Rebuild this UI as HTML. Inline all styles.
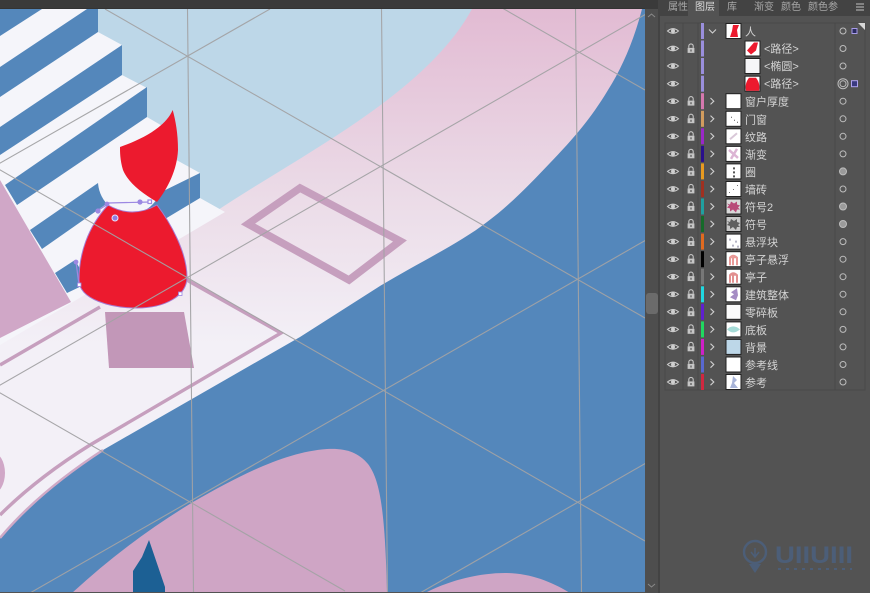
<!DOCTYPE html>
<html><head><meta charset="utf-8"><style>
html,body{margin:0;padding:0;background:#535353;width:870px;height:593px;overflow:hidden}
svg{display:block;position:absolute;left:0;top:0}
text{font-family:"Liberation Sans","Noto Sans CJK SC",sans-serif;fill:#d4d4d4;font-size:11px}
</style></head><body>
<svg width="870" height="593" viewBox="0 0 870 593" xmlns="http://www.w3.org/2000/svg">
<defs>
<linearGradient id="band" x1="0" y1="9" x2="0" y2="345" gradientUnits="userSpaceOnUse"><stop offset="0" stop-color="#e2bbd3"/><stop offset=".55" stop-color="#ebdbe7"/><stop offset="1" stop-color="#f3f0f7"/></linearGradient>
<clipPath id="art"><rect x="0" y="9" width="645" height="583"/></clipPath>
<g id="eye"><path d="M-5.5,0 Q0,-4.6 5.5,0 Q0,4.6 -5.5,0Z" fill="none" stroke="#cfcfcf" stroke-width="1"/><circle r="2" fill="#cfcfcf"/></g>
<g id="lock"><rect x="-3.4" y="-.6" width="6.8" height="5" fill="#c6c6c6"/><path d="M-2.2,-.6V-2.4a2.2,2.2 0 0 1 4.4,0V-.6" fill="none" stroke="#c6c6c6" stroke-width="1.1"/><rect x="-.6" y="1" width="1.2" height="2" fill="#535353"/></g>
<path id="chev" d="M-1.5,-3.2L1.8,0L-1.5,3.2" fill="none" stroke="#d0d0d0" stroke-width="1.1"/>
<circle id="tg" r="3" fill="none" stroke="#bdbdbd" stroke-width="1"/>
</defs>

<rect width="870" height="593" fill="#535353"/>

<g clip-path="url(#art)">
<rect x="0" y="9" width="645" height="584" fill="#5487bb"/>
<!-- light blue -->
<path d="M98,9H490L480,60L410,130L215,212L200,200L98,60Z" fill="#bdd7e8"/>
<!-- band -->
<path d="M472,9H645L642,9C634,40 622,68 608,90C590,120 572,140 550,163C530,184 510,205 487,222C460,243 420,262 380,286L300,337L103,450C60,478 25,508 0,538V300L215,212C300,155 425,95 472,9Z" fill="url(#band)"/>
<!-- white stairs -->
<path d="M0,9H98V32L122,45V75L147,88V117L171,131V157L200,173V198L225,212L0,345Z" fill="#f5f5fa"/>
<!-- blue stripes -->
<path d="M0,9H42L0,36Z" fill="#5487bb"/>
<path d="M87,9H98V32L0,97V67Z" fill="#5487bb"/>
<path d="M122,45V75L0,155V127Z" fill="#5487bb"/>
<path d="M147,87V117L17,205L5,185Z" fill="#5487bb"/>
<path d="M98,183L112,200L42,249L30,230Z" fill="#5487bb"/>
<path d="M55,273L75,260L88,283L67,293Z" fill="#5487bb"/>
<path d="M200,173V198L150,228L145,200Z" fill="#5487bb"/>
<!-- white head -->
<ellipse cx="130" cy="181" rx="32" ry="33" fill="#f5f5fa"/>
<!-- pink triangle -->
<path d="M0,180L71,302L0,338Z" fill="#d0a7c7"/>
<!-- frames -->
<path d="M0,365L100,307" fill="none" stroke="#c69fbe" stroke-width="3.5"/>
<path d="M185,279L281,333L90,445C58,465 25,490 0,515" fill="none" stroke="#c69fbe" stroke-width="3.4"/>
<path d="M103,450C60,478 25,508 0,538" fill="none" stroke="#cfa9c6" stroke-width="2.5"/>
<path d="M300,188L400,241L349,280L248,224Z" fill="none" stroke="#c69fbe" stroke-width="7.500"/>
<ellipse cx="-8" cy="473" rx="13" ry="21" fill="#d0a7c7"/>
<!-- shadow -->
<path d="M105,312H184L194,368H109Z" fill="#c297b8"/>
<!-- bottom pink -->
<path d="M72,593C110,558 150,528 193,502C240,475 285,452 327,449C345,448 358,452 368,464C380,480 385,510 387,593Z" fill="#cfa5c5"/>
<path d="M425,593C450,580 480,573 505,573C530,573 552,582 570,593Z" fill="#cfa5c5"/>
<path d="M149,540L142,557L133,571V593H165V587Z" fill="#1c6094"/>
<!-- person -->
<path d="M172.700,110C176,122 178,135 178,150C177,170 168,188 157,202C140,192 128,182 123,170C120,160 120,152 120,147C140,140 165,128 172.700,110Z" fill="#ec1a2e"/>
<path d="M108,205Q132,219 157,205C170,222 187,252 187,277C187,296 165,308 137,308C112,308 79,300 79,280C79,255 87,228 108,205Z" fill="#ec1a2e" stroke="#a779d0" stroke-width="1"/>
<!-- guides -->
<g stroke="#a3a3a5" stroke-width="1.1" fill="none" opacity=".95">
<path d="M187.500,9L193.500,593M381.500,9L387.500,593M575.500,9L581.500,593"/>
<path d="M105,9L645,318M-5,167L645,541M-5,390L345,591M490,1L645,90"/>
<path d="M270,9L-5,166M646,14L-5,388M646,240L30,593M646,463L420,593"/>
</g>
<!-- selection handles -->
<g stroke="#9c88e2" stroke-width="1.2" fill="#9c88e2">
<path d="M108,203L150,202M97,211L108,204M76,262L79,285" fill="none"/>
<circle cx="140" cy="202" r="2"/><circle cx="98" cy="211" r="2"/><circle cx="76" cy="262" r="1.800"/><circle cx="107" cy="204" r="1.800"/>
<rect x="148" y="200" width="3.500" height="3.500" fill="#fff"/><rect x="77.500" y="283" width="3.500" height="3.500" fill="#fff" stroke-width=".8"/><rect x="178.500" y="292" width="3.500" height="3.500" fill="#fff" stroke-width=".8"/>
<circle cx="115" cy="218" r="3" fill="#8f7de0" stroke="#e6e0fa" stroke-width="1"/>
</g>
</g>

<!-- top bar -->
<rect width="660" height="9" fill="#3a3a3a"/>
<rect y="8" width="645" height="1" fill="#333"/>
<!-- scrollbar -->
<rect x="645" y="9" width="13" height="584" fill="#4e4e4e"/>
<rect x="658" y="0" width="2" height="593" fill="#434343"/>
<rect x="646" y="293" width="12" height="21" rx="3" fill="#6b6b6b"/>
<path d="M648,17L651.500,14L655,17" fill="none" stroke="#8a8a8a" stroke-width="1"/>
<path d="M648,584L651.500,587L655,584" fill="none" stroke="#8a8a8a" stroke-width="1"/>

<!-- tabs -->
<rect x="660" y="0" width="210" height="16" fill="#434343"/>
<rect x="688" y="0" width="31" height="17" fill="#535353"/>
<g style="font-size:10px">
<text x="668" y="10" style="font-size:10px;fill:#a8a8a8">属性</text>
<text x="695" y="10" style="font-size:10px;fill:#dcdcdc">图层</text>
<text x="727" y="10" style="font-size:10px;fill:#a8a8a8">库</text>
<text x="754" y="10" style="font-size:10px;fill:#a8a8a8">渐变</text>
<text x="781" y="10" style="font-size:10px;fill:#a8a8a8">颜色</text>
<text x="808" y="10" style="font-size:10px;fill:#a8a8a8">颜色参</text>
</g>
<path d="M856,4H864M856,7H864M856,10H864" stroke="#c0c0c0" stroke-width="1"/>

<!-- panel frame -->
<rect x="665" y="23" width="200" height="367" fill="#535353" stroke="#494949" stroke-width="1"/>
<path d="M683,23V390M698,23V390M835,23V390" stroke="#484848" stroke-width="1"/>
<path d="M858,23H865V30Z" fill="#d8d8d8"/>

<!-- row 0 -->
<g transform="translate(0,31)"><use href="#eye" x="673"/><rect x="701" y="-8" width="3" height="16" fill="#9a8fdc"/><path d="M709,-1.500L712.500,2L716,-1.500" fill="none" stroke="#d0d0d0" stroke-width="1.100"/><rect x="726" y="-7.500" width="15" height="15" fill="#fff" stroke="#222"/><path d="M733,-6L739,-6L737,-1L738,6H730L732,0Z" fill="#ec1a2e"/><text x="745" y="4.500">人</text><use href="#tg" x="843"/><rect x="852" y="-2.500" width="5" height="5" fill="#2a2a60" stroke="#a89ce8"/></g>
<!-- row 1 -->
<g transform="translate(0,48.500)"><use href="#eye" x="673"/><use href="#lock" x="691"/><rect x="701" y="-8" width="3" height="16" fill="#9a8fdc"/><rect x="745" y="-7.500" width="15" height="15" fill="#fff" stroke="#222"/><path d="M754,-6L758,-6L756,2L751,6L747,2Z" fill="#ec1a2e"/><text x="764" y="4">&lt;路径&gt;</text><use href="#tg" x="843"/></g>
<!-- row 2 -->
<g transform="translate(0,66)"><use href="#eye" x="673"/><rect x="701" y="-8" width="3" height="16" fill="#9a8fdc"/><rect x="745" y="-7.500" width="15" height="15" fill="#f6f6f8" stroke="#222"/><text x="764" y="4">&lt;椭圆&gt;</text><use href="#tg" x="843"/></g>
<!-- row 3 -->
<g transform="translate(0,83.700)"><use href="#eye" x="673"/><rect x="701" y="-8" width="3" height="16" fill="#9a8fdc"/><rect x="745" y="-7.500" width="15" height="15" fill="#fff" stroke="#222"/><path d="M749,-6H756C759,-2 760,2 759,7H746C745,2 746,-2 749,-6Z" fill="#ec1a2e"/><text x="764" y="4">&lt;路径&gt;</text><use href="#tg" x="843"/><circle cx="843" r="5" fill="none" stroke="#bdbdbd"/><rect x="851.500" y="-3" width="6" height="6" fill="#3a3a80" stroke="#b0a4ee"/></g>

<!-- remaining rows -->
<g transform="translate(0,101.200)"><use href="#eye" x="673"/><use href="#lock" x="691"/><rect x="701" y="-8" width="3" height="16" fill="#d678ae"/><use href="#chev" x="712"/><rect x="726" y="-7.500" width="15" height="15" fill="#fff" stroke="#222"/><text x="745" y="4.500">窗户厚度</text><use href="#tg" x="843"/></g>
<g transform="translate(0,118.800)"><use href="#eye" x="673"/><use href="#lock" x="691"/><rect x="701" y="-8" width="3" height="16" fill="#d19c5e"/><use href="#chev" x="712"/><rect x="726" y="-7.500" width="15" height="15" fill="#fff" stroke="#222"/><path d="M731,-2h1v1h-1zM734,1h1v1h-1zM737,3h1v1h-1z" fill="#555"/><text x="745" y="4.500">门窗</text><use href="#tg" x="843"/></g>
<g transform="translate(0,136.300)"><use href="#eye" x="673"/><use href="#lock" x="691"/><rect x="701" y="-8" width="3" height="16" fill="#9a28c8"/><use href="#chev" x="712"/><rect x="726" y="-7.500" width="15" height="15" fill="#fff" stroke="#222"/><path d="M730,3L737,-3" stroke="#d9c8d8" stroke-width="2"/><text x="745" y="4.500">纹路</text><use href="#tg" x="843"/></g>
<g transform="translate(0,153.900)"><use href="#eye" x="673"/><use href="#lock" x="691"/><rect x="701" y="-8" width="3" height="16" fill="#2a0f8c"/><use href="#chev" x="712"/><rect x="726" y="-7.500" width="15" height="15" fill="#fff" stroke="#222"/><path d="M729,-4L738,4M737,-5L731,5" stroke="#dcb4d4" stroke-width="2.500"/><text x="745" y="4.500">渐变</text><use href="#tg" x="843"/></g>
<g transform="translate(0,171.400)"><use href="#eye" x="673"/><use href="#lock" x="691"/><rect x="701" y="-8" width="3" height="16" fill="#e89a20"/><use href="#chev" x="712"/><rect x="726" y="-7.500" width="15" height="15" fill="#fff" stroke="#222"/><path d="M733,-4h2v2h-2zM733,0h2v2h-2zM733,4h2v2h-2z" fill="#555"/><text x="745" y="4.500">圈</text><circle cx="843" r="3.500" fill="#9a9a9a" stroke="#bdbdbd"/></g>
<g transform="translate(0,189)"><use href="#eye" x="673"/><use href="#lock" x="691"/><rect x="701" y="-8" width="3" height="16" fill="#a03020"/><use href="#chev" x="712"/><rect x="726" y="-7.500" width="15" height="15" fill="#fff" stroke="#222"/><path d="M729,3h1v1h-1zM733,0h1v1h-1zM737,-4h1v1h-1z" fill="#777"/><text x="745" y="4.500">墙砖</text><use href="#tg" x="843"/></g>
<g transform="translate(0,206.500)"><use href="#eye" x="673"/><use href="#lock" x="691"/><rect x="701" y="-8" width="3" height="16" fill="#20a0a0"/><use href="#chev" x="712"/><rect x="726" y="-7.500" width="15" height="15" fill="#d8d8d8" stroke="#222"/><path d="M727,-3L730,-2L731,-5L734,-3L737,-5L737,-2L740,-1L738,1L740,3L737,3L736,6L733,3L730,5L730,2L727,1L729,-1Z" fill="#b84a78"/><text x="745" y="4.500">符号2</text><circle cx="843" r="3.500" fill="#9a9a9a" stroke="#bdbdbd"/></g>
<g transform="translate(0,224)"><use href="#eye" x="673"/><use href="#lock" x="691"/><rect x="701" y="-8" width="3" height="16" fill="#156a2a"/><use href="#chev" x="712"/><rect x="726" y="-7.500" width="15" height="15" fill="#c8c8c8" stroke="#222"/><path d="M727,-3L730,-2L731,-5L734,-3L737,-5L737,-2L740,-1L738,1L740,3L737,3L736,6L733,3L730,5L730,2L727,1L729,-1Z" fill="#5e5e5e"/><text x="745" y="4.500">符号</text><circle cx="843" r="3.500" fill="#9a9a9a" stroke="#bdbdbd"/></g>
<g transform="translate(0,241.600)"><use href="#eye" x="673"/><use href="#lock" x="691"/><rect x="701" y="-8" width="3" height="16" fill="#e06a20"/><use href="#chev" x="712"/><rect x="726" y="-7.500" width="15" height="15" fill="#fff" stroke="#222"/><path d="M729,-3h2v2h-2zM735,-1h2v2h-2zM732,3h2v2h-2zM737,4h2v2h-2z" fill="#b5b5c5"/><text x="745" y="4.500">悬浮块</text><use href="#tg" x="843"/></g>
<g transform="translate(0,259.200)"><use href="#eye" x="673"/><use href="#lock" x="691"/><rect x="701" y="-8" width="3" height="16" fill="#000"/><use href="#chev" x="712"/><rect x="726" y="-7.500" width="15" height="15" fill="#fff" stroke="#222"/><path d="M729,6V-2Q733,-7 738,-2V6H736V-1H734V6H732V-1H731V6Z" fill="#ea9a98"/><text x="745" y="4.500">亭子悬浮</text><use href="#tg" x="843"/></g>
<g transform="translate(0,276.700)"><use href="#eye" x="673"/><use href="#lock" x="691"/><rect x="701" y="-8" width="3" height="16" fill="#777"/><use href="#chev" x="712"/><rect x="726" y="-7.500" width="15" height="15" fill="#fff" stroke="#222"/><path d="M729,6V-2Q733,-7 738,-2V6H736V-1H734V6H732V-1H731V6Z" fill="#e29090"/><text x="745" y="4.500">亭子</text><use href="#tg" x="843"/></g>
<g transform="translate(0,294.300)"><use href="#eye" x="673"/><use href="#lock" x="691"/><rect x="701" y="-8" width="3" height="16" fill="#20d8e0"/><use href="#chev" x="712"/><rect x="726" y="-7.500" width="15" height="15" fill="#fff" stroke="#222"/><path d="M737,-6L731,-2L734,0L730,3L736,6L738,1Z" fill="#a58cc4"/><text x="745" y="4.500">建筑整体</text><use href="#tg" x="843"/></g>
<g transform="translate(0,311.800)"><use href="#eye" x="673"/><use href="#lock" x="691"/><rect x="701" y="-8" width="3" height="16" fill="#6020d0"/><use href="#chev" x="712"/><rect x="726" y="-7.500" width="15" height="15" fill="#fbfbfb" stroke="#222"/><text x="745" y="4.500">零碎板</text><use href="#tg" x="843"/></g>
<g transform="translate(0,329.400)"><use href="#eye" x="673"/><use href="#lock" x="691"/><rect x="701" y="-8" width="3" height="16" fill="#20d860"/><use href="#chev" x="712"/><rect x="726" y="-7.500" width="15" height="15" fill="#fff" stroke="#222"/><path d="M727,0Q733,-6 740,0Q733,6 727,0Z" fill="#a6dcd8"/><text x="745" y="4.500">底板</text><use href="#tg" x="843"/></g>
<g transform="translate(0,346.900)"><use href="#eye" x="673"/><use href="#lock" x="691"/><rect x="701" y="-8" width="3" height="16" fill="#d020c8"/><use href="#chev" x="712"/><rect x="726" y="-7.500" width="15" height="15" fill="#bdd7e8" stroke="#222"/><text x="745" y="4.500">背景</text><use href="#tg" x="843"/></g>
<g transform="translate(0,364.500)"><use href="#eye" x="673"/><use href="#lock" x="691"/><rect x="701" y="-8" width="3" height="16" fill="#5868d0"/><use href="#chev" x="712"/><rect x="726" y="-7.500" width="15" height="15" fill="#fff" stroke="#222"/><text x="745" y="4.500">参考线</text><use href="#tg" x="843"/></g>
<g transform="translate(0,382)"><use href="#eye" x="673"/><use href="#lock" x="691"/><rect x="701" y="-8" width="3" height="16" fill="#d02840"/><use href="#chev" x="712"/><rect x="726" y="-7.500" width="15" height="15" fill="#fff" stroke="#222"/><path d="M733,-6L737,-2L734,1L738,6H730L732,1Z" fill="#a8b4d8"/><text x="745" y="4.500">参考</text><use href="#tg" x="843"/></g>

<!-- watermark -->
<g opacity=".7">
<g fill="none" stroke="#4a6488" stroke-width="2.400">
<circle cx="755" cy="552" r="11"/>
<path d="M755,548V557M751,552L755,557L759,552" stroke-width="1.500"/>
</g>
<path d="M749,564H761L755,573Z" fill="#4a6488"/>
<text x="775" y="563" style="font-size:24px;font-weight:bold;fill:#4a6488" textLength="78" lengthAdjust="spacingAndGlyphs">UIIUIII</text>
<path d="M778,569H852" stroke="#4a6488" stroke-width="2" stroke-dasharray="3 5"/>
</g>
</svg>
</body></html>
